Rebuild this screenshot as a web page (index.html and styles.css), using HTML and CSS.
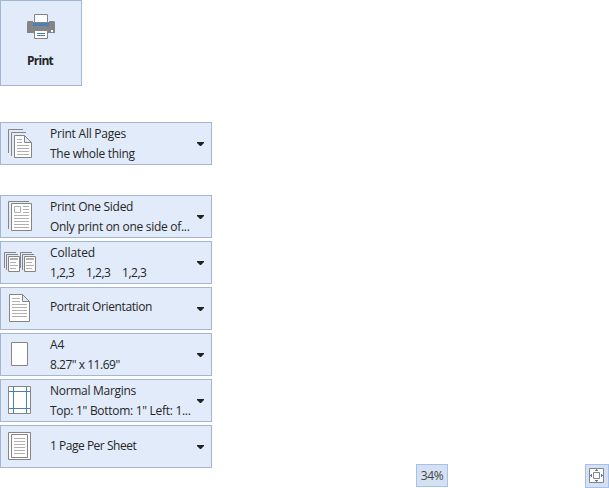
FILE: index.html
```html
<!DOCTYPE html>
<html lang="en">
<head>
<meta charset="utf-8">
<title>Print</title>
<link rel="stylesheet" href="styles.css">
</head>
<body>
<main class="screen">
  <section class="settings">
    <button class="print">
      <svg width="28" height="25" viewBox="0 0 28 25"><path fill="#858585" d="M1 7h26l1 1v12H0V8z"/><path fill="#e2ebfa" d="M0 19h7v2H0zM21 19h7v2h-7z"/><path fill="#fff" d="M6 7h16v1H6z"/><path fill="#4a7fb9" d="M6 8h16v4H6z"/><path fill="#fff" stroke="#858585" d="M7.500.5h13v8h-13zM7.500 16.500h13v8h-13z"/><path fill="#fff" d="M24 16h2v2h-2z"/><path stroke="#4a7fb9" d="M10 19.500h8M10 21.500h8"/></svg>
      <span class="print-label">Print</span>
    </button>
    <button class="option range">
      <svg class="icon" viewBox="1 1 48 41"><path class="line" d="M8.500 31V7.500H23M11.500 34V10.500H26"/><path class="page" d="M14.500 13.500h10l7 7v15h-17zM24.500 13.500v7h7"/><path class="rule" d="M17 17.500h5M17 20.500h5M17 23.500h12M17 26.500h12M17 29.500h12M17 32.500h12"/></svg>
      <span class="text"><span class="snug">Print All Pages</span><span class="tight">The whole thing</span></span>
      <svg class="arrow" viewBox="0 0 7 4"><path d="M0 0h7v1L4 4H3L0 1z"/></svg>
    </button>
    <button class="option">
      <svg class="icon" viewBox="1 1 48 41"><path class="line" d="M8.500 34V6.500H29"/><path class="page" d="M11.500 8.500h20v27h-20z"/><path class="rule" d="M14.500 11.500h6v6h-6zM23 11.500h6M23 14.500h6M23 17.500h6M14 20.500h15M14 23.500h15M14 26.500h15M14 29.500h15M14 32.500h15"/></svg>
      <span class="text"><span class="tight">Print One Sided</span><span class="tight">Only print on one side of...</span></span>
      <svg class="arrow" viewBox="0 0 7 4"><path d="M0 0h7v1L4 4H3L0 1z"/></svg>
    </button>
    <button class="option">
      <svg class="icon" viewBox="1 1 48 41"><path class="line" d="M4.500 27V11.500H16M6.500 29V13.500H18M20.500 27V11.500H32M22.500 29V13.500H34"/><path class="page" d="M8.500 15.500h11v15h-11zM24.500 15.500h11v15h-11z"/><path class="rule" d="M10 17.500h8M10 18.500h8M10 21.500h6M10 24.500h8M10 27.500h6M26 17.500h8M26 18.500h8M26 21.500h6M26 24.500h8M26 27.500h6"/></svg>
      <span class="text"><span>Collated</span><span class="sets digits"><i>1,2,3</i><i>1,2,3</i><i>1,2,3</i></span></span>
      <svg class="arrow" viewBox="0 0 7 4"><path d="M0 0h7v1L4 4H3L0 1z"/></svg>
    </button>
    <button class="option">
      <svg class="icon" viewBox="1 1 48 41"><path class="page" d="M9.500 7.500h13l7 7v20h-20zM22.500 7.500v7h7"/><path class="rule" d="M12 11.500h8M12 14.500h8M12 17.500h15M12 20.500h15M12 23.500h15M12 26.500h15M12 29.500h15"/></svg>
      <span class="text single"><span class="tighter">Portrait Orientation</span></span>
      <svg class="arrow" viewBox="0 0 7 4"><path d="M0 0h7v1L4 4H3L0 1z"/></svg>
    </button>
    <button class="option">
      <svg class="icon" viewBox="1 1 48 41"><path class="page" d="M11.500 9.500h16v23h-16z"/></svg>
      <span class="text"><span>A4</span><span class="digits">8.27" x 11.69"</span></span>
      <svg class="arrow" viewBox="0 0 7 4"><path d="M0 0h7v1L4 4H3L0 1z"/></svg>
    </button>
    <button class="option">
      <svg class="icon" viewBox="1 1 48 41"><path class="page" d="M8.500 7.500h22v27h-22z"/><path class="blue" d="M13.500 8v26M26.500 8v26M9 12.500h21M9 29.500h21"/></svg>
      <span class="text"><span class="tight">Normal Margins</span><span class="tight">Top: 1" Bottom: 1" Left: 1...</span></span>
      <svg class="arrow" viewBox="0 0 7 4"><path d="M0 0h7v1L4 4H3L0 1z"/></svg>
    </button>
    <button class="option">
      <svg class="icon" viewBox="1 1 48 41"><path class="page" d="M8.500 7.500h22v27h-22zM11.500 9.500h16v23h-16z"/><path class="rule" d="M14 13.500h11M14 16.500h11M14 19.500h11M14 22.500h11M14 25.500h11M14 28.500h11"/></svg>
      <span class="text single low"><span class="digits">1 Page Per Sheet</span></span>
      <svg class="arrow" viewBox="0 0 7 4"><path d="M0 0h7v1L4 4H3L0 1z"/></svg>
    </button>
  </section>
  <footer class="zoom">
    <button class="percent">34%</button>
    <button class="fit"><svg width="16" height="16" viewBox="0 0 16 16"><path class="page" d="M.5.5h14v14H.5zM4.500 4.500h6v6h-6z"/><path class="blue" d="M6 2.500h3M7.500 1v1M6 12.500h3M7.500 13v1M2.500 6v3M1 7.500h1M12.500 6v3M13 7.500h1"/></svg></button>
  </footer>
</main>
</body>
</html>
```
FILE: styles.css
```css
* { box-sizing: border-box; }
body { margin: 0; background: #fff; }
.screen {
  display: flex;
  width: 609px;
  height: 488px;
  font-family: "Open Sans", "Noto Sans", sans-serif;
  font-size: 12px;
  color: #262626;
}
button {
  display: flex;
  margin: 0;
  padding: 0;
  border: 1px solid #a3b7d3;
  background: #e2ebfa;
  color: inherit;
  font: inherit;
  text-align: left;
}
svg { display: block; flex: none; fill: none; }
.settings { display: flex; flex-direction: column; gap: 3px; width: 212px; }
.print {
  flex-direction: column;
  align-items: center;
  width: 82px;
  height: 86px;
  padding-top: 13px;
}
.print-label {
  margin: 13px 2px 0 0;
  line-height: 18px;
  font-weight: 700;
  letter-spacing: -0.7px;
}
.option { width: 212px; height: 43px; }
.range { margin: 33px 0 27px; }
.icon { width: 48px; height: 41px; }
.text {
  display: flex;
  flex-direction: column;
  width: 148px;
  padding: 1px 0 0 1px;
  line-height: 20px;
  letter-spacing: -0.1px;
  white-space: nowrap;
}
.text.single { padding-top: 9px; }
.text.low { padding-top: 10px; }
.snug { letter-spacing: -0.23px; }
.tight { letter-spacing: -0.29px; }
.tighter { letter-spacing: -0.39px; }
.digits { letter-spacing: -0.48px; }
.sets { display: flex; gap: 12px; }
.sets i { width: 24px; font-style: normal; }
.arrow { width: 7px; height: 4px; margin-top: 19px; fill: #222; }
.line { stroke: #858585; }
.page { fill: #fff; stroke: #858585; }
.rule { stroke: #b0b0b0; }
.blue { stroke: #4a7fb9; }
.zoom {
  display: flex;
  flex: 1;
  align-self: flex-end;
  align-items: flex-start;
  justify-content: space-between;
  height: 24px;
  padding-left: 204px;
}
.percent, .fit {
  justify-content: center;
  align-items: center;
  border-color: #a3c1ea;
  background: #d5e1f2;
}
.percent { width: 32px; height: 23px; color: #444; letter-spacing: -0.3px; }
.fit { width: 24px; height: 24px; }
```
